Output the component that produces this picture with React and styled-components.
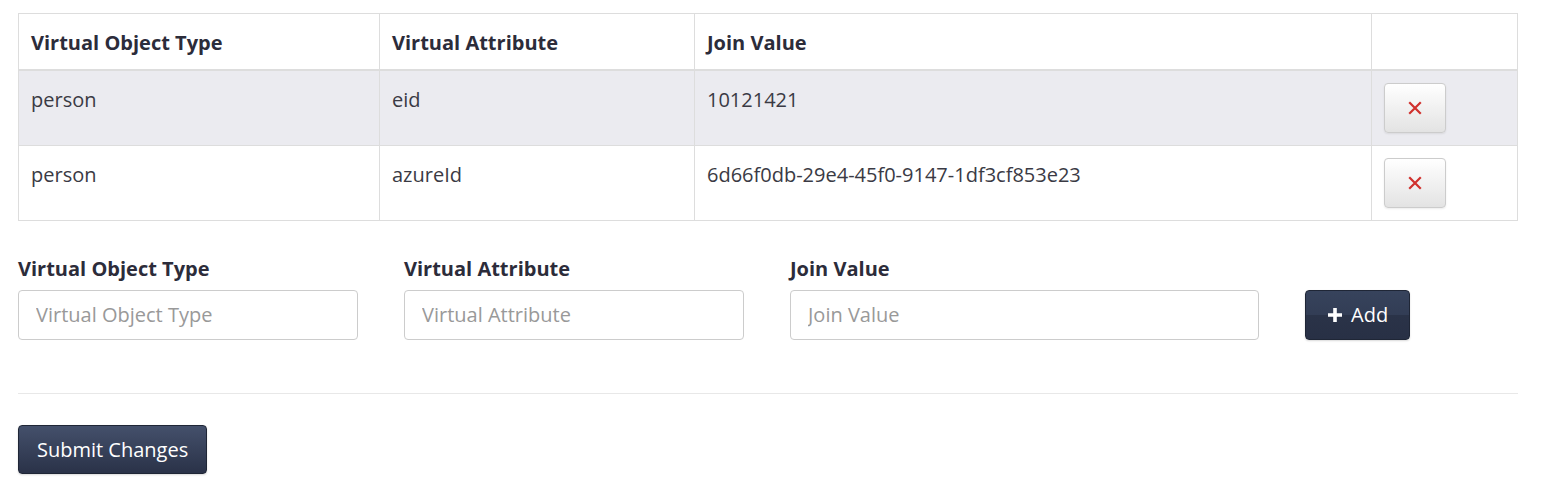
import React from 'react'
import styled, { createGlobalStyle } from 'styled-components'

const GlobalStyle = createGlobalStyle`
  body {
    margin: 0;
    background: #fff;
    font-family: "Open Sans", "Noto Sans", sans-serif;
    color: #333;
  }
  * { box-sizing: border-box; }
`

const Page = styled.div`
  padding: 13px 41px 10px 18px;
`

const Table = styled.table`
  width: 1500px;
  border-collapse: collapse;
  border: 1px solid #ddd;
  font-family: "Open Sans", "Noto Sans", sans-serif;
  font-size: 20px;
`

const HeadCell = styled.th`
  height: 56px;
  padding: 0 12px 12px;
  text-align: left;
  vertical-align: bottom;
  font-weight: 700;
  color: #2c2c3a;
  border-left: 1px solid #ddd;
  border-bottom: 2px solid #ddd;
  line-height: 1.36;
  width: ${p => p.$w || 'auto'};
`

const Row = styled.tr`
  background: ${p => (p.$striped ? '#ebebf0' : '#fff')};
`

const Cell = styled.td`
  padding: 12px 12px;
  height: 75px;
  vertical-align: top;
  color: #3a3a44;
  border-left: 1px solid #ddd;
  border-top: 1px solid #ddd;
  line-height: 34px;
`

const DeleteButton = styled.button`
  width: 62px;
  height: 50px;
  border: 1px solid #ccc;
  border-radius: 4px;
  background: linear-gradient(to bottom, #fff 0%, #e3e3e3 100%);
  box-shadow: 0 1px 2px rgba(0, 0, 0, 0.08);
  display: flex;
  align-items: center;
  justify-content: center;
  padding: 0;
  cursor: pointer;
`

const Form = styled.div`
  display: flex;
  align-items: flex-end;
  gap: 46px;
  margin-top: 36px;
`

const Field = styled.div`
  display: flex;
  flex-direction: column;
  width: ${p => p.$w}px;
`

const Label = styled.label`
  font-weight: 700;
  font-size: 20px;
  color: #2c2c3a;
  margin-bottom: 9px;
  line-height: 24px;
`

const Input = styled.input`
  height: 50px;
  width: 100%;
  border: 1px solid #ccc;
  border-radius: 4px;
  padding: 0 17px;
  font-size: 20px;
  font-family: inherit;
  color: #333;
  outline: none;
  &::placeholder { color: #999; }
`

const DarkButton = styled.button`
  height: ${p => p.$h}px;
  padding: 0 ${p => p.$px}px;
  border: 1px solid #1f2636;
  border-radius: 4px;
  color: #fff;
  font-family: inherit;
  font-size: 20px;
  display: inline-flex;
  align-items: center;
  gap: 8px;
  cursor: pointer;
  box-shadow: 0 1px 2px rgba(0, 0, 0, 0.15);
  background: ${p =>
    p.$glossy
      ? 'linear-gradient(to bottom, #37435c 0%, #323d55 50%, #2a3348 51%, #283045 100%)'
      : 'linear-gradient(to bottom, #44506b 0%, #2a3248 100%)'};
`

const Divider = styled.hr`
  width: 1500px;
  margin: 53px 0 31px;
  border: 0;
  border-top: 1px solid #e8e8e8;
`

const rows = [
  ['person', 'eid', '10121421'],
  ['person', 'azureId', '6d66f0db-29e4-45f0-9147-1df3cf853e23'],
]

const Cross = () => (
  <svg width="14" height="14" viewBox="0 0 14 14">
    <path d="M2 2 L12 12 M12 2 L2 12" stroke="#d0312d" strokeWidth="2.2" strokeLinecap="square" />
  </svg>
)

const Plus = () => (
  <svg width="16" height="16" viewBox="0 0 16 16">
    <path d="M8 1 V15 M1 8 H15" stroke="#fff" strokeWidth="3.6" />
  </svg>
)

export default function App () {
  return (
    <Page>
      <GlobalStyle />
      <Table>
        <thead>
          <tr>
            <HeadCell $w="361px">Virtual Object Type</HeadCell>
            <HeadCell $w="315px">Virtual Attribute</HeadCell>
            <HeadCell $w="677px">Join Value</HeadCell>
            <HeadCell></HeadCell>
          </tr>
        </thead>
        <tbody>
          {rows.map((r, i) => (
            <Row key={i} $striped={i % 2 === 0}>
              <Cell>{r[0]}</Cell>
              <Cell>{r[1]}</Cell>
              <Cell>{r[2]}</Cell>
              <Cell>
                <DeleteButton><Cross /></DeleteButton>
              </Cell>
            </Row>
          ))}
        </tbody>
      </Table>
      <Form>
        <Field $w={340}>
          <Label>Virtual Object Type</Label>
          <Input placeholder="Virtual Object Type" />
        </Field>
        <Field $w={340}>
          <Label>Virtual Attribute</Label>
          <Input placeholder="Virtual Attribute" />
        </Field>
        <Field $w={469}>
          <Label>Join Value</Label>
          <Input placeholder="Join Value" />
        </Field>
        <DarkButton $h={50} $px={21} $glossy><Plus />Add</DarkButton>
      </Form>
      <Divider />
      <DarkButton $h={49} $px={18}>Submit Changes</DarkButton>
    </Page>
  )
}
